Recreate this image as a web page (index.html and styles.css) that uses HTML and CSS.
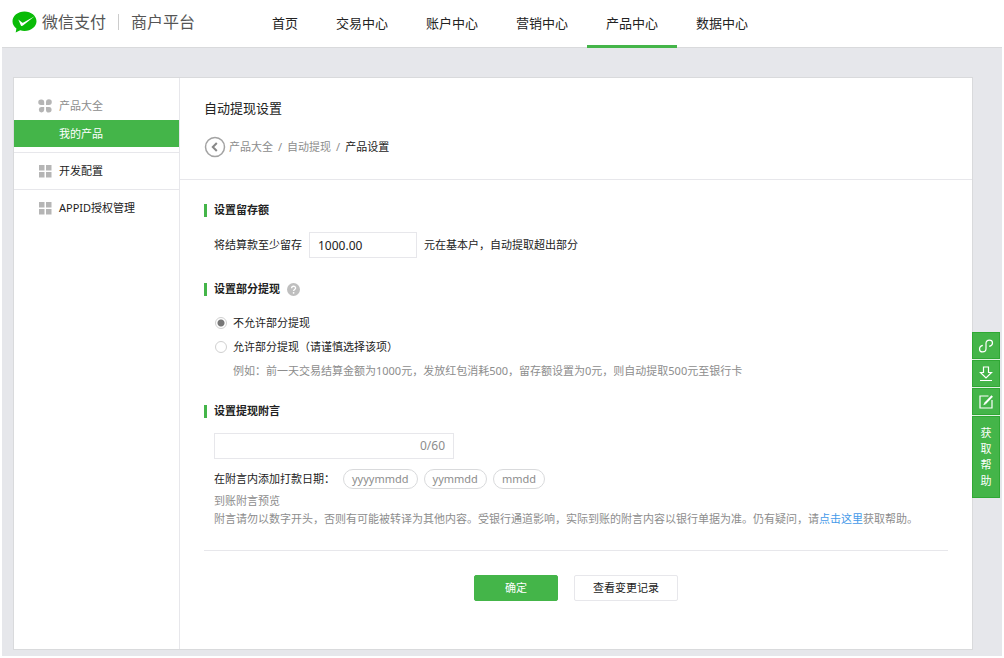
FILE: index.html
```html
<!DOCTYPE html>
<html lang="zh-CN">
<head>
  <meta charset="UTF-8" />
  <meta name="viewport" content="width=device-width, initial-scale=1.0"/>
  <title>自动提现设置 - 微信支付商户平台</title>
  <link rel="stylesheet" href="styles.css">
</head>
<body>
  <header class="header">
    <a class="logo" href="#">
      <svg width="25" height="22" viewBox="0 0 25 22">
        <path fill="#09bb07" d="M12.500 .5C5.900 .5.500 4.800.500 10.300c0 3 1.500 5.500 3.900 7.300L3.700 21.500l4.500-2.300c1.400.5 2.800.7 4.300.7 6.600 0 12-4.300 12-9.700S19.100.500 12.500.500z"/>
        <path fill="#fff" d="M6.300 8.600l3.800 2.800c.5.300.9.300 1.400.1L22.600 5.300 11 14.600c-.8.600-1.600.6-2.100-.2z"/>
      </svg>
      <span class="logo-name">微信支付</span>
      <span class="logo-sub">商户平台</span>
    </a>
    <nav class="nav">
      <a href="#">首页</a>
      <a href="#">交易中心</a>
      <a href="#">账户中心</a>
      <a href="#">营销中心</a>
      <a href="#" class="active">产品中心</a>
      <a href="#">数据中心</a>
    </nav>
  </header>

  <div class="page">
    <div class="card">
      <!-- 侧边菜单 -->
      <aside class="sidebar">
        <div class="menu-group">
          <a class="menu-title muted" href="#">
            <svg width="14" height="14" viewBox="0 0 14 14" fill="#b5b5b5">
              <path d="M3 .5h.5A2.700 2.700 0 0 1 6.200 3.200V6H3A2.700 2.700 0 0 1 3 .5zM8 6V3.200A2.900 2.900 0 1 1 10.900 6zM6.200 8v3a2.700 2.700 0 1 1-3-3zM8 8h3a2.800 2.800 0 1 1-3 3z"/>
            </svg>
            产品大全
          </a>
          <a class="menu-item active" href="#">我的产品</a>
        </div>
        <div class="menu-group">
          <a class="menu-title" href="#">
            <svg width="14" height="14" viewBox="0 0 14 14" fill="#b5b5b5">
              <path d="M1 1h5.500v5.500H1zM8 1h5.500v5.500H8zM1 8h5.500v5.500H1zM8 8h5.500v5.500H8z"/>
            </svg>
            开发配置
          </a>
        </div>
        <div class="menu-group">
          <a class="menu-title" href="#">
            <svg width="14" height="14" viewBox="0 0 14 14" fill="#b5b5b5">
              <path d="M1 1h5.500v5.500H1zM8 1h5.500v5.500H8zM1 8h5.500v5.500H1zM8 8h5.500v5.500H8z"/>
            </svg>
            APPID授权管理
          </a>
        </div>
      </aside>

      <main class="main">
        <div class="main-head">
          <h1>自动提现设置</h1>
          <div class="breadcrumb">
            <a class="back" href="#" aria-label="返回">
              <svg width="22" height="22" viewBox="0 0 22 22" fill="none">
                <circle cx="11" cy="11" r="9.500" stroke="#a3a3a3" stroke-width="1.500"/>
                <path d="M12.800 7L8.800 11l4 4" stroke="#888" stroke-width="2"/>
              </svg>
            </a>
            <a href="#">产品大全</a><span>/</span><a href="#">自动提现</a><span>/</span><b>产品设置</b>
          </div>
        </div>

        <form class="settings">
          <section>
            <h2>设置留存额</h2>
            <div class="row">
              <label for="keep">将结算款至少留存</label>
              <input type="text" id="keep" class="text keep" value="1000.00" />
              <span>元在基本户，自动提取超出部分</span>
            </div>
          </section>

          <section>
            <h2>设置部分提现
              <svg width="13" height="13" viewBox="0 0 13 13" fill="none">
                <circle cx="6.500" cy="6.500" r="6.500" fill="#bfbfbf"/>
                <path d="M4.600 5.200c0-2.700 4-2.500 4-.2 0 1.400-2 1.500-2 3" stroke="#fff" stroke-width="1.300"/>
                <circle cx="6.600" cy="9.800" r=".9" fill="#fff"/>
              </svg>
            </h2>
            <div class="radios">
              <label><input type="radio" name="part" checked />不允许部分提现</label>
              <label><input type="radio" name="part" />允许部分提现（请谨慎选择该项）</label>
              <p>例如：前一天交易结算金额为1000元，发放红包消耗500，留存额设置为0元，则自动提取500元至银行卡</p>
            </div>
          </section>

          <section>
            <h2><label for="remark">设置提现附言</label></h2>
            <div class="text remark">
              <input type="text" id="remark" maxlength="60" />
              <span>0/60</span>
            </div>
            <div class="tags">
              <span>在附言内添加打款日期：</span>
              <button type="button">yyyymmdd</button>
              <button type="button">yymmdd</button>
              <button type="button">mmdd</button>
            </div>
            <div class="tips">
              <p>到账附言预览</p>
              <p>附言请勿以数字开头，否则有可能被转译为其他内容。受银行通道影响，实际到账的附言内容以银行单据为准。仍有疑问，请<a href="#">点击这里</a>获取帮助。</p>
            </div>
          </section>

          <div class="actions">
            <button type="button" class="btn primary">确定</button>
            <button type="button" class="btn">查看变更记录</button>
          </div>
        </form>
      </main>
    </div>
  </div>

  <!-- 右侧悬浮工具条 -->
  <div class="dock">
    <a href="#" aria-label="小程序">
      <svg width="16" height="16" viewBox="0 0 16 16" fill="none" stroke="#fff" stroke-width="1.200">
        <path d="M4.800 7.400C2.700 7.900 1.500 9.300 1.500 10.900c0 1.800 1.400 3 3.100 3 1.900 0 3.400-1.200 3.400-3.100V5.300c0-1.900 1.400-3.200 3.300-3.200 1.800 0 3.200 1.100 3.200 2.800 0 1.600-1.300 3-3.300 3.400"/>
      </svg>
    </a>
    <a href="#" aria-label="下载">
      <svg width="16" height="16" viewBox="0 0 16 16" fill="none" stroke="#fff" stroke-width="1.200">
        <path d="M5.500 1h5v5.500h3L8 12 2.500 6.500h3zM2 14.500h12"/>
      </svg>
    </a>
    <a href="#" aria-label="反馈">
      <svg width="16" height="16" viewBox="0 0 16 16" fill="none" stroke="#fff">
        <path stroke-width="1.200" d="M10.500 2H2v12h12V6"/>
        <path stroke-width="2" d="M14.200 2L7 9.500"/>
        <path fill="#fff" stroke="none" d="M6.300 8.800l1.500 1.500-2.500 1z"/>
      </svg>
    </a>
    <a href="#" class="help">获取帮助</a>
  </div>
</body>
</html>
```
FILE: styles.css
```css
* {
  box-sizing: border-box;
}

body {
  font-family: "Noto Sans", "Noto Sans CJK SC", sans-serif;
  font-size: 11px;
  line-height: 18px;
  margin: 0 2px;
  background: #fff;
  color: #222;
}

a {
  color: inherit;
  text-decoration: none;
}

h1, h2, p {
  margin: 0;
  font-size: inherit;
}

input, button {
  font: inherit;
  color: inherit;
}

svg {
  flex: none;
  display: block;
}

/* 顶部导航 */
.header {
  display: flex;
  height: 48px;
  border-bottom: 1px solid #d9dadc;
}

.logo {
  display: flex;
  align-items: center;
  width: 251px;
  padding: 0 0 3px 10px;
  font-size: 16px;
  color: #555;
}

.logo-name {
  margin-left: 5px;
  padding-right: 12px;
  line-height: 16px;
  border-right: 1px solid #ccc;
}

.logo-sub {
  padding-left: 12px;
}

.nav {
  display: flex;
  font-size: 13px;
}

.nav a {
  height: 48px;
  padding: 0 19px;
  line-height: 46px;
}

.nav a.active {
  border-bottom: 3px solid #44b549;
}

.page {
  padding: 29px 29px 6px 11px;
  background: #e6e7eb;
}

.card {
  display: flex;
  background: #fff;
  border: 1px solid #d9dadc;
}

/* 侧边菜单 */
.sidebar {
  flex: none;
  width: 166px;
  padding-top: 14px;
  border-right: 1px solid #e7e7eb;
}

.menu-group {
  border-bottom: 1px solid #e7e7eb;
}

.menu-group:first-child {
  padding-bottom: 5px;
}

.menu-group:last-child {
  border-bottom: none;
}

.menu-title {
  display: flex;
  align-items: center;
  gap: 7px;
  height: 36px;
  padding-left: 24px;
}

.menu-title.muted {
  height: 28px;
  color: #8d8d8d;
}

.menu-item {
  display: block;
  padding-left: 45px;
  line-height: 27px;
}

.menu-item.active {
  background: #44b549;
  color: #fff;
}

/* 主内容 */
.main {
  flex: 1;
  min-width: 0;
}

.main-head {
  padding: 20px 24px 21px;
  border-bottom: 1px solid #e7e7eb;
}

.main-head h1 {
  font-size: 13px;
  font-weight: normal;
  line-height: 20px;
}

.breadcrumb {
  display: flex;
  align-items: center;
  margin-top: 18px;
  color: #8d8d8d;
}

.breadcrumb .back {
  margin-right: 3px;
}

.breadcrumb span {
  padding: 0 5px;
}

.breadcrumb b {
  font-weight: normal;
  color: #222;
}

.settings {
  padding: 21px 24px 48px;
}

section {
  padding-left: 10px;
  margin-bottom: 22px;
}

h2 {
  display: flex;
  align-items: center;
  gap: 7px;
  margin: 0 0 13px -10px;
  font-weight: bold;
}

h2::before {
  content: "";
  width: 3px;
  height: 13px;
  background: #44b549;
}

.row {
  display: flex;
  align-items: center;
  gap: 7px;
}

.text {
  height: 26px;
  padding: 0 8px;
  border: 1px solid #e7e7eb;
  background: #fff;
}

.keep {
  width: 108px;
  font-size: 12px;
}

.radios label {
  display: flex;
  align-items: center;
  height: 24px;
}

.radios input {
  appearance: none;
  width: 12px;
  height: 12px;
  margin: 0 6px 0 1px;
  border: 1px solid #d0d0d0;
  border-radius: 50%;
}

.radios input:checked {
  background: radial-gradient(circle, #777 3px, #fff 4px);
}

.radios p {
  margin-top: 3px;
  padding-left: 19px;
  color: #8d8d8d;
}

.remark {
  display: flex;
  align-items: center;
  width: 240px;
  font-size: 12px;
  color: #8d8d8d;
}

.remark input {
  flex: 1;
  min-width: 0;
  padding: 0;
  border: none;
  outline: none;
}

.tags {
  display: flex;
  align-items: center;
  gap: 6px;
  margin: 10px 0 3px;
}

.tags button {
  height: 20px;
  padding: 0 8px;
  line-height: 16px;
  color: #8d8d8d;
  background: #fff;
  border: 1px solid #d9dadc;
  border-radius: 10px;
}

.tags span {
  padding-right: 2px;
}

.tips {
  color: #8d8d8d;
}

.tips a {
  color: #459ae9;
}

.actions {
  display: flex;
  justify-content: center;
  gap: 16px;
  padding-top: 24px;
  border-top: 1px solid #e7e7eb;
}

.btn {
  height: 26px;
  padding: 0 18px;
  background: #fff;
  border: 1px solid #e7e7eb;
  border-radius: 2px;
}

.btn.primary {
  padding: 0 30px;
  background: #44b549;
  border-color: #44b549;
  color: #fff;
}

/* 悬浮工具条 */
.dock {
  position: fixed;
  top: 332px;
  right: 4px;
  width: 28px;
  display: flex;
  flex-direction: column;
  gap: 1px;
  background: #dff2e0;
}

.dock a {
  display: flex;
  align-items: center;
  justify-content: center;
  height: 27px;
  background: #44b549;
  border: 1px solid #2fa834;
  color: #fff;
}

.dock .help {
  height: 82px;
  padding: 0 7px;
  line-height: 16px;
  text-align: center;
}
```
